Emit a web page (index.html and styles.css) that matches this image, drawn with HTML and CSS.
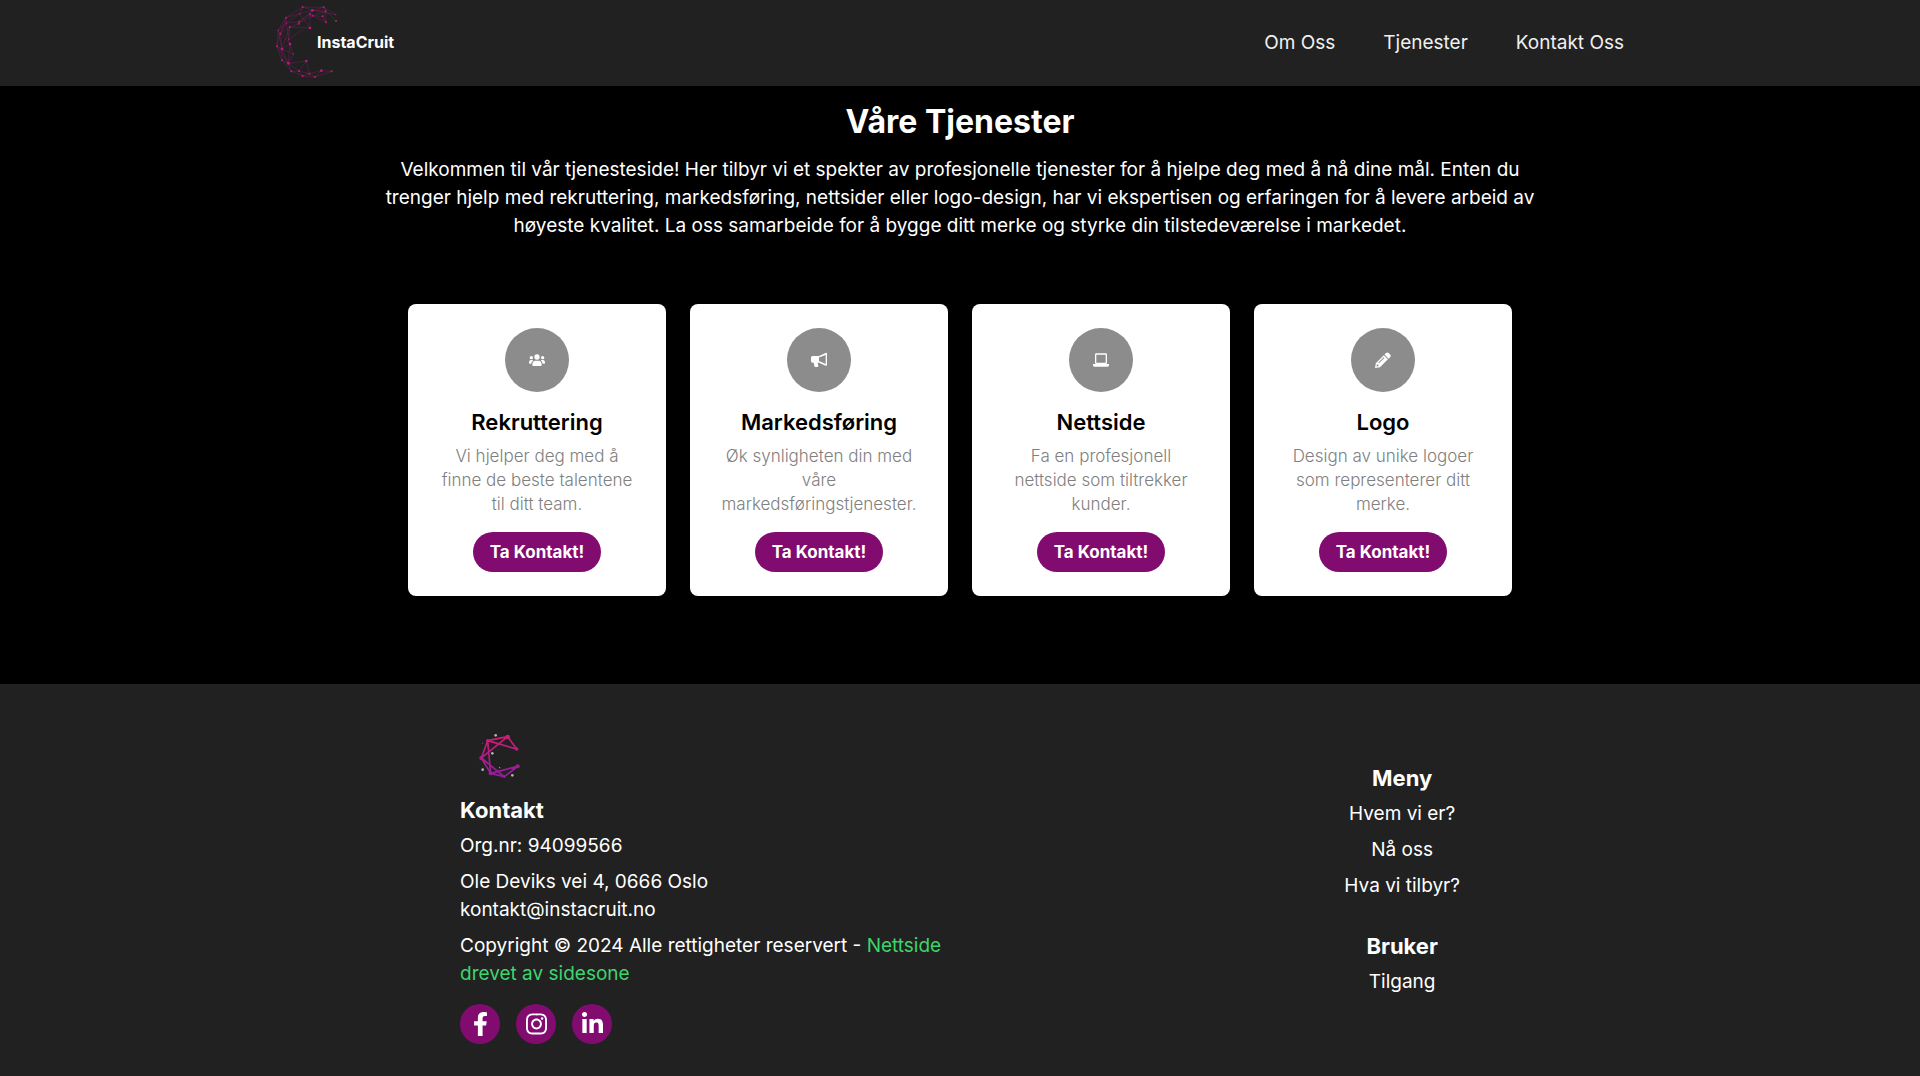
FILE: index.html
```html
<!DOCTYPE html>
<html lang="no">
<head>
<meta charset="utf-8">
<meta name="viewport" content="width=device-width, initial-scale=1">
<title>InstaCruit – Våre Tjenester</title>
<link rel="stylesheet" href="styles.css">
</head>
<body>
<header class="site-header">
  <div class="header-inner">
    <a class="brand" href="#">
      <svg class="brand-mark" viewBox="45 15 195 225" aria-hidden="true">
        <path class="web" d="M128 24 191 25 227 47M128 24 78 56 54 94 51 142 66 184 94 217 128 231 165 234 215 217 184 215 148 224 117 216 85 193 66 150 61 104 79 72 119 44 157 34 197 36 228 66M191 25 197 36 188 52 158 50 150 46 157 34 191 25M128 24 119 44 78 56 79 72 118 68 150 46M79 72 54 94 61 104 89 84 116 74 158 50 198 70 188 52M89 84 150 87 150 46M118 68 157 34 227 47M150 87 119 44M128 24 157 34M61 104 51 142 66 150 90 135 86 122 89 84 66 150 66 184 85 193 90 135 100 165 85 193 139 186 117 216 128 231 148 224 165 234 184 215M139 186 148 224M94 217 85 193M94 217 117 216M90 135 61 104M54 94 66 150M86 122 130 90M51 142 85 193M78 56 61 104M79 72 86 122M158 50 197 36M66 150 100 165M197 36 198 70"/>
        <g class="nodes">
          <circle cx="128" cy="24" r="3"/><circle cx="191" cy="25" r="3"/><circle cx="157" cy="34" r="4"/><circle cx="197" cy="36" r="3"/><circle cx="119" cy="44" r="2"/><circle cx="150" cy="46" r="3"/><circle cx="158" cy="50" r="3"/><circle cx="188" cy="52" r="3"/><circle cx="227" cy="47" r="2"/><circle cx="228" cy="66" r="3"/><circle cx="198" cy="70" r="3"/><circle cx="78" cy="56" r="3"/><circle cx="118" cy="68" r="3"/><circle cx="116" cy="74" r="3"/><circle cx="79" cy="72" r="2"/><circle cx="89" cy="84" r="3"/><circle cx="150" cy="87" r="4"/><circle cx="54" cy="94" r="2"/><circle cx="61" cy="104" r="3"/><circle cx="90" cy="135" r="4"/><circle cx="86" cy="122" r="2"/><circle cx="51" cy="142" r="3"/><circle cx="66" cy="150" r="4"/><circle cx="66" cy="184" r="3"/><circle cx="100" cy="165" r="2"/><circle cx="85" cy="193" r="4"/><circle cx="139" cy="186" r="4"/><circle cx="94" cy="217" r="3"/><circle cx="117" cy="216" r="3"/><circle cx="148" cy="224" r="3"/><circle cx="128" cy="231" r="3"/><circle cx="165" cy="234" r="3"/><circle cx="184" cy="215" r="4"/><circle cx="215" cy="217" r="3"/>
        </g>
      </svg>
      <span class="brand-name">InstaCruit</span>
    </a>
    <nav class="main-nav" aria-label="Hovedmeny">
      <a href="#">Om Oss</a>
      <a href="#">Tjenester</a>
      <a href="#">Kontakt Oss</a>
    </nav>
  </div>
</header>

<main class="services">
  <h1>Våre Tjenester</h1>
  <p class="intro">Velkommen til vår tjenesteside! Her tilbyr vi et spekter av profesjonelle tjenester for å hjelpe deg med å nå dine mål. Enten du trenger hjelp med rekruttering, markedsføring, nettsider eller logo-design, har vi ekspertisen og erfaringen for å levere arbeid av høyeste kvalitet. La oss samarbeide for å bygge ditt merke og styrke din tilstedeværelse i markedet.</p>
  <div class="cards">
    <article class="card">
      <div class="card-icon">
        <svg viewBox="0 0 48 48" aria-hidden="true"><circle cx="24" cy="15" r="8"/><circle cx="7" cy="17" r="5"/><circle cx="41" cy="17" r="5"/><path d="M10 39c0-8 3-13 9-13h10c6 0 9 5 9 13 0 2-1 3-3 3H13c-2 0-3-1-3-3zM0 33c0-5 2-9 6-9h4c1 0 2 0 3 1-3 2-5 6-6 10H2c-1 0-2-1-2-2zM48 33c0-5-2-9-6-9h-4c-1 0-2 0-3 1 3 2 5 6 6 10h5c1 0 2-1 2-2z"/></svg>
      </div>
      <h2>Rekruttering</h2>
      <p>Vi hjelper deg med å finne de beste talentene til ditt team.</p>
      <button type="button">Ta Kontakt!</button>
    </article>
    <article class="card">
      <div class="card-icon">
        <svg viewBox="0 0 48 48" aria-hidden="true"><path fill-rule="evenodd" d="M44 3c2-1 4 0 4 2v12c2 1 2 9 0 10v12c0 2-2 3-4 2L24 32h-4l2 10c0 2-1 3-3 3h-6c-2 0-3-1-3-3L8 32H5c-3 0-5-2-5-5V17c0-3 2-5 5-5h19zM44 9l-18 7h-2v12h2l18 8z"/></svg>
      </div>
      <h2>Markedsføring</h2>
      <p>Øk synligheten din med våre markedsføringstjenester.</p>
      <button type="button">Ta Kontakt!</button>
    </article>
    <article class="card">
      <div class="card-icon">
        <svg viewBox="0 0 24 24" aria-hidden="true"><path d="M20 17.700c.6-.3 1-1 1-1.700V4c0-1.100-.9-2-2-2H5c-1.100 0-2 .9-2 2v12c0 .7.4 1.400 1 1.700V18H0v2c0 1.100.9 2 2 2h20c1.100 0 2-.9 2-2v-2h-4zM5 16V4h14v12z"/></svg>
      </div>
      <h2>Nettside</h2>
      <p>Fa en profesjonell nettside som tiltrekker kunder.</p>
      <button type="button">Ta Kontakt!</button>
    </article>
    <article class="card">
      <div class="card-icon">
        <svg viewBox="0 0 24 24" aria-hidden="true"><path fill-rule="evenodd" d="M16.500 1.500a3 3 0 0 1 4 0l2.200 2.200a3 3 0 0 1 0 4L20.500 10 14.200 3.700zM13.200 4.800l6.200 6.200L7.500 22.800 0 24l1.200-7.200zM13 8 5 16l1 1 8-8zM3 18l-.7 3.700L6 21z"/></svg>
      </div>
      <h2>Logo</h2>
      <p>Design av unike logoer som representerer ditt merke.</p>
      <button type="button">Ta Kontakt!</button>
    </article>
  </div>
</main>

<footer class="site-footer">
  <div class="footer-inner">
    <div class="contact">
      <svg class="footer-mark" viewBox="30 -12 240 240" aria-hidden="true">
        <defs><linearGradient id="mark" gradientUnits="userSpaceOnUse" x1="0" y1="50" x2="0" y2="170"><stop offset="0" stop-color="#cf1c74"/><stop offset="1" stop-color="#8e1f9c"/></linearGradient></defs>
        <path fill="none" stroke="url(#mark)" stroke-width="5" d="M173 50 113 62 200 87 173 50 94 114 113 62 122 160 94 114 163 170 203 139 122 160 163 170"/>
        <g fill="url(#mark)"><circle cx="173" cy="51" r="7"/><circle cx="113" cy="62" r="5"/><circle cx="200" cy="87" r="5"/><circle cx="94" cy="114" r="6"/><circle cx="122" cy="160" r="6"/><circle cx="203" cy="139" r="6"/><circle cx="163" cy="170" r="4"/><circle cx="97" cy="70" r="2"/></g>
        <g fill="#b9adb9"><circle cx="137" cy="46" r="4"/><circle cx="127" cy="100" r="4"/><circle cx="98" cy="149" r="4"/><circle cx="187" cy="166" r="4"/><circle cx="149" cy="143" r="2"/></g>
      </svg>
      <h2>Kontakt</h2>
      <p>Org.nr: 94099566</p>
      <p>Ole Deviks vei 4, 0666 Oslo<br>kontakt@instacruit.no</p>
      <p>Copyright © 2024 Alle rettigheter reservert - <a class="credit" href="#">Nettside drevet av sidesone</a></p>
      <div class="social">
        <a href="#" aria-label="Facebook"><svg viewBox="0 0 320 512" aria-hidden="true"><path d="M279.140 288l14.220-92.660h-88.910v-60.130c0-25.350 12.420-50.060 52.240-50.060h40.420V6.260S260.430 0 225.360 0c-73.220 0-121.080 44.380-121.080 124.720v70.620H22.890V288h81.390v224h100.170V288z"/></svg></a>
        <a href="#" aria-label="Instagram"><svg viewBox="0 0 448 512" aria-hidden="true"><path d="M224.100 141c-63.600 0-114.900 51.300-114.900 114.900s51.300 114.900 114.900 114.900S339 319.500 339 255.900 287.700 141 224.100 141zm0 189.600c-41.100 0-74.700-33.500-74.700-74.700s33.500-74.700 74.700-74.700 74.700 33.500 74.700 74.700-33.600 74.700-74.700 74.700zm146.400-194.300c0 14.900-12 26.800-26.800 26.800-14.900 0-26.800-12-26.800-26.800s12-26.800 26.800-26.800 26.800 12 26.800 26.800zm76.100 27.200c-1.700-35.900-9.900-67.700-36.200-93.900-26.200-26.200-58-34.400-93.900-36.200-37-2.100-147.900-2.100-184.900 0-35.800 1.700-67.600 9.900-93.900 36.100s-34.400 58-36.200 93.900c-2.100 37-2.100 147.900 0 184.900 1.700 35.900 9.900 67.700 36.200 93.900s58 34.400 93.900 36.200c37 2.100 147.900 2.100 184.900 0 35.900-1.700 67.700-9.900 93.900-36.200 26.200-26.200 34.400-58 36.200-93.900 2.100-37 2.100-147.800 0-184.800zM398.800 388c-7.800 19.600-22.900 34.700-42.600 42.600-29.500 11.700-99.500 9-132.100 9s-102.700 2.600-132.100-9c-19.600-7.800-34.700-22.900-42.600-42.600-11.700-29.500-9-99.500-9-132.100s-2.600-102.700 9-132.100c7.800-19.600 22.900-34.700 42.600-42.600 29.500-11.700 99.500-9 132.100-9s102.700-2.600 132.100 9c19.600 7.800 34.700 22.900 42.600 42.600 11.700 29.500 9 99.500 9 132.100s2.700 102.700-9 132.100z"/></svg></a>
        <a href="#" aria-label="LinkedIn"><svg viewBox="0 0 448 512" aria-hidden="true"><path d="M100.280 448H7.400V148.900h92.880zM53.790 108.100C24.090 108.100 0 83.500 0 53.800a53.790 53.790 0 0 1 107.580 0c0 29.700-24.100 54.300-53.790 54.300zM447.900 448h-92.680V302.400c0-34.700-.7-79.200-48.290-79.200-48.290 0-55.690 37.700-55.690 76.700V448h-92.780V148.900h89.080v40.800h1.300c12.400-23.500 42.690-48.300 87.880-48.300 94 0 111.280 61.900 111.280 142.300V448z"/></svg></a>
      </div>
    </div>
    <nav class="footer-nav" aria-label="Bunnmeny">
      <section>
        <h2>Meny</h2>
        <a href="#">Hvem vi er?</a>
        <a href="#">Nå oss</a>
        <a href="#">Hva vi tilbyr?</a>
      </section>
      <section>
        <h2>Bruker</h2>
        <a href="#">Tilgang</a>
      </section>
    </nav>
  </div>
</footer>
</body>
</html>
```
FILE: styles.css
```css
* {
  box-sizing: border-box;
}

body {
  display: flex;
  flex-direction: column;
  min-height: 100vh;
  margin: 0;
  background: #212121;
  color: #fff;
  font: 400 19px/28px Inter, sans-serif;
}

h1, h2, p {
  margin: 0;
}

a {
  color: inherit;
  text-decoration: none;
}

.site-header {
  background: #212121;
}

.header-inner {
  display: flex;
  align-items: center;
  justify-content: space-between;
  max-width: 1400px;
  min-height: 86px;
  margin: 0 auto;
  padding: 0 36px 0 15px;
}

.brand {
  display: flex;
  align-items: center;
  padding-bottom: 3px;
}

.brand-mark {
  width: 65px;
  height: 75px;
}

.web {
  fill: none;
  stroke: #a01875;
  stroke-opacity: 0.5;
  stroke-width: 2;
}

.nodes {
  fill: #c0187c;
}

.brand-name {
  margin-left: -23px;
  font-size: 16px;
  font-weight: 700;
}

.main-nav {
  display: flex;
  gap: 48px;
  color: #f0f0f0;
}

.services {
  padding: 18px 24px 88px;
  background: #000;
  text-align: center;
}

h1 {
  margin-bottom: 16px;
  font-size: 32px;
  font-weight: 700;
  line-height: 36px;
}

.intro {
  max-width: 1152px;
  margin: 0 auto 64px;
}

.cards {
  display: grid;
  grid-template-columns: repeat(4, 1fr);
  gap: 24px;
  max-width: 1104px;
  margin: 0 auto;
}

.card {
  display: flex;
  flex-direction: column;
  align-items: center;
  padding: 24px;
  border-radius: 8px;
  background: #fff;
  color: #000;
}

.card-icon {
  display: flex;
  align-items: center;
  justify-content: center;
  width: 64px;
  height: 64px;
  margin-bottom: 16px;
  border-radius: 50%;
  background: #8c8c8c;
}

.card-icon svg {
  width: 16px;
  height: 16px;
  fill: #fff;
}

h2 {
  font-size: 22px;
  font-weight: 700;
  line-height: 28px;
}

.card h2 {
  font-weight: 600;
}

.card p {
  margin: 8px 0 16px;
  padding: 0 4px;
  color: #808080;
  font-size: 17px;
  font-weight: 300;
  line-height: 24px;
}

.card button {
  min-width: 128px;
  height: 40px;
  margin-top: auto;
  padding: 0 16px;
  border: 0;
  border-radius: 20px;
  background: #820b70;
  color: #fff;
  font: 700 17px/24px Inter, sans-serif;
}

.site-footer {
  padding: 32px 24px;
  background: #212121;
}

.footer-inner {
  display: flex;
  align-items: center;
  justify-content: space-between;
  max-width: 1000px;
  margin: 0 auto;
}

.contact {
  display: flex;
  flex-direction: column;
  gap: 8px;
  width: 50%;
}

.footer-mark {
  width: 80px;
  height: 80px;
  margin-bottom: -8px;
}

.credit {
  color: #3dd56d;
}

.social {
  display: flex;
  gap: 16px;
  margin-top: 8px;
}

.social a {
  display: flex;
  align-items: center;
  justify-content: center;
  width: 40px;
  height: 40px;
  border-radius: 50%;
  background: #820b70;
}

.social svg {
  height: 24px;
  fill: #fff;
}

.footer-nav {
  display: flex;
  flex-direction: column;
  gap: 32px;
  text-align: center;
}

.footer-nav section {
  display: flex;
  flex-direction: column;
  gap: 8px;
}
```
